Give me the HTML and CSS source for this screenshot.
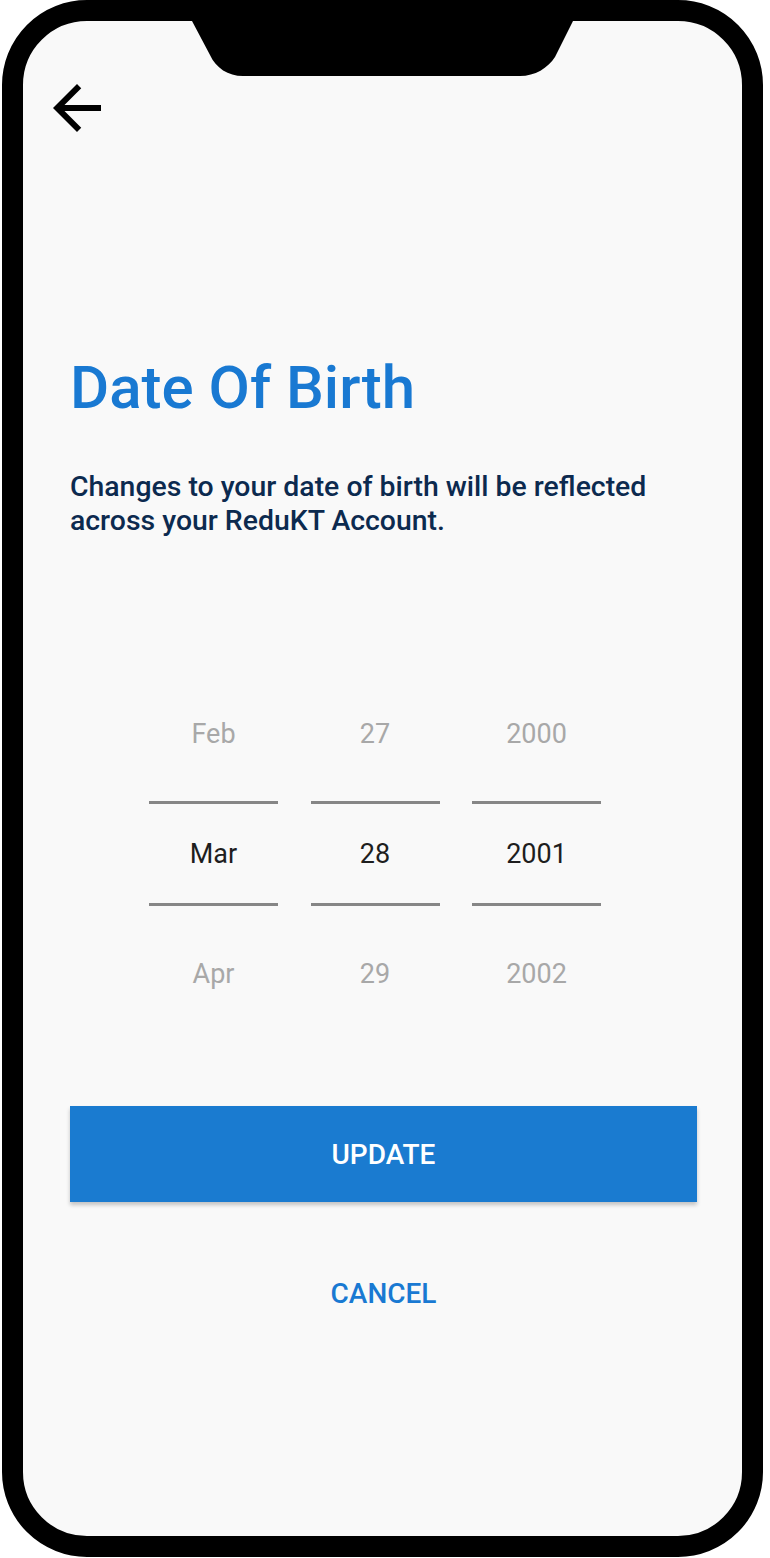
FILE: index.html
```html
<!DOCTYPE html>
<html lang="en">
<head>
<meta charset="utf-8">
<title>Date Of Birth</title>
<link rel="stylesheet" href="styles.css">
</head>
<body>
<div class="phone">
  <svg class="notch" width="761" height="80" viewBox="0 0 761 80" aria-hidden="true">
    <path d="M188,0 L190,21 L208,55 C214,68 226,76 241,76 L518,76 C533,76 546,68 553,57 L571,21 L573,0 Z" fill="#000"/>
  </svg>
  <div class="screen">
    <button class="back" aria-label="Back">
      <svg width="72" height="72" viewBox="0 0 24 24"><path d="M20 11H7.83l5.59-5.59L12 4l-8 8 8 8 1.41-1.41L7.83 13H20v-2z" fill="#000"/></svg>
    </button>
    <h1 class="title">Date Of Birth</h1>
    <p class="subtitle">Changes to your date of birth will be reflected across your ReduKT Account.</p>
    <div class="picker">
      <div class="col">
        <div class="item prev">Feb</div>
        <div class="item current">Mar</div>
        <div class="item next">Apr</div>
      </div>
      <div class="col">
        <div class="item prev">27</div>
        <div class="item current">28</div>
        <div class="item next">29</div>
      </div>
      <div class="col">
        <div class="item prev">2000</div>
        <div class="item current">2001</div>
        <div class="item next">2002</div>
      </div>
    </div>
    <button class="btn-primary">UPDATE</button>
    <button class="btn-text">CANCEL</button>
  </div>
</div>
</body>
</html>
```
FILE: styles.css
```css
html, body {
  margin: 0;
  padding: 0;
  background: #ffffff;
}
body {
  width: 770px;
  height: 1558px;
  overflow: hidden;
  font-family: Roboto, "Liberation Sans", sans-serif;
}
.phone {
  position: relative;
  margin-left: 2px;
  width: 761px;
  height: 1557px;
  box-sizing: border-box;
  border: 21px solid #000;
  border-radius: 85px;
  background: #f9f9f9;
}
.notch {
  position: absolute;
  left: -21px;
  top: -21px;
}
.screen {
  display: flex;
  flex-direction: column;
  padding: 0 45px 0 47px;
}
.back {
  align-self: flex-start;
  margin: 51px 0 0 -29px;
  padding: 0;
  border: 0;
  background: none;
  width: 72px;
  height: 72px;
  display: block;
}
.back svg { display: block; }
.title {
  margin: 206px 0 0 0;
  font-size: 60px;
  line-height: 76px;
  font-weight: 500;
  color: #1979d2;
}
.subtitle {
  margin: 44px 0 0 0;
  font-size: 28.4px;
  line-height: 34px;
  font-weight: 500;
  color: #0c2a4f;
}
.picker {
  margin: 129px 0 0 79px;
  display: grid;
  grid-template-columns: 129px 129px 129px;
  column-gap: 32.5px;
}
.col {
  display: flex;
  flex-direction: column;
}
.item {
  text-align: center;
  font-size: 27px;
  color: #a8a8a8;
}
.prev {
  height: 134px;
  line-height: 134px;
}
.current {
  height: 99px;
  line-height: 100px;
  border-top: 3px solid #868686;
  border-bottom: 3px solid #868686;
  color: #1e1e1e;
}
.next {
  height: 136px;
  line-height: 136px;
}
.btn-primary {
  margin-top: 64px;
  height: 96px;
  border: 0;
  background: #1a7bd0;
  color: #fff;
  font-family: Roboto, "Liberation Sans", sans-serif;
  font-size: 28px;
  font-weight: 500;
  box-shadow: 0 3px 4px rgba(0,0,0,0.22);
  padding: 0;
}
.btn-text {
  margin-top: 67px;
  align-self: center;
  height: 48px;
  border: 0;
  background: none;
  color: #1979d2;
  font-family: Roboto, "Liberation Sans", sans-serif;
  font-size: 28px;
  font-weight: 500;
  padding: 0;
}
```
